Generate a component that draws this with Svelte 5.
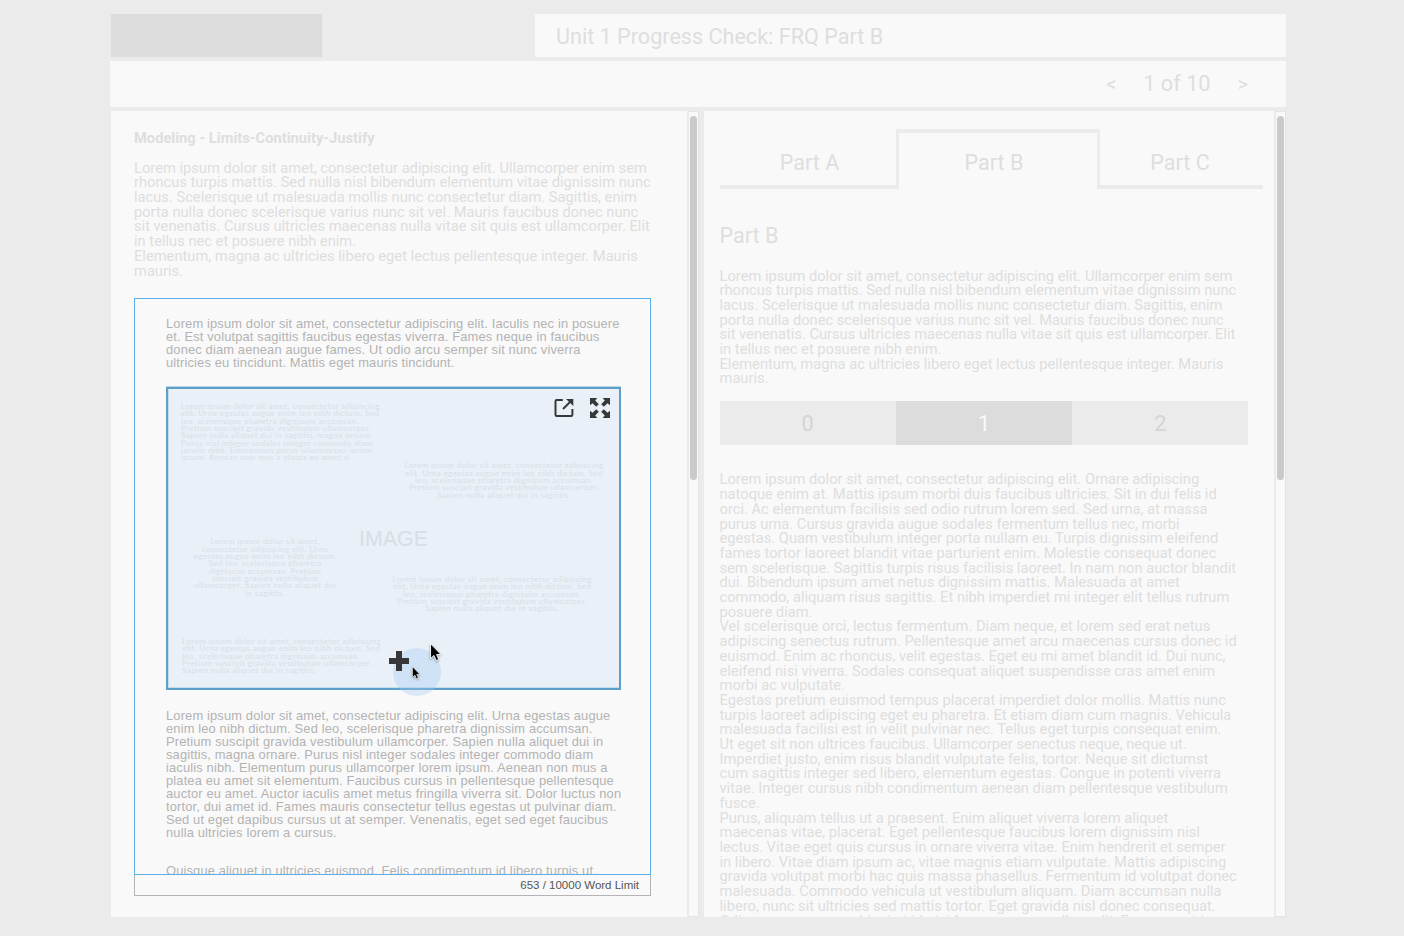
<script>
  const intro = [
    'Lorem ipsum dolor sit amet, consectetur adipiscing elit. Ullamcorper enim sem',
    'rhoncus turpis mattis. Sed nulla nisl bibendum elementum vitae dignissim nunc',
    'lacus. Scelerisque ut malesuada mollis nunc consectetur diam. Sagittis, enim',
    'porta nulla donec scelerisque varius nunc sit vel. Mauris faucibus donec nunc',
    'sit venenatis. Cursus ultricies maecenas nulla vitae sit quis est ullamcorper. Elit',
    'in tellus nec et posuere nibh enim.',
    'Elementum, magna ac ultricies libero eget lectus pellentesque integer. Mauris',
    'mauris.'
  ];
  const answer = [
    'Lorem ipsum dolor sit amet, consectetur adipiscing elit. Ornare adipiscing',
    'natoque enim at. Mattis ipsum morbi duis faucibus ultricies. Sit in dui felis id',
    'orci. Ac elementum facilisis sed odio rutrum lorem sed. Sed urna, at massa',
    'purus urna. Cursus gravida augue sodales fermentum tellus nec, morbi',
    'egestas. Quam vestibulum integer porta nullam eu. Turpis dignissim eleifend',
    'fames tortor laoreet blandit vitae parturient enim. Molestie consequat donec',
    'sem scelerisque. Sagittis turpis risus facilisis laoreet. In nam non auctor blandit',
    'dui. Bibendum ipsum amet netus dignissim mattis. Malesuada at amet',
    'commodo, aliquam risus sagittis. Et nibh imperdiet mi integer elit tellus rutrum',
    'posuere diam.',
    'Vel scelerisque orci, lectus fermentum. Diam neque, et lorem sed erat netus',
    'adipiscing senectus rutrum. Pellentesque amet arcu maecenas cursus donec id',
    'euismod. Enim ac rhoncus, velit egestas. Eget eu mi amet blandit id. Dui nunc,',
    'eleifend nisi viverra. Sodales consequat aliquet suspendisse cras amet enim',
    'morbi ac vulputate.',
    'Egestas pretium euismod tempus placerat imperdiet dolor mollis. Mattis nunc',
    'turpis laoreet adipiscing eget eu pharetra. Et etiam diam cum magnis. Vehicula',
    'malesuada facilisi est in velit pulvinar nec. Tellus eget turpis consequat enim.',
    'Ut eget sit non ultrices faucibus. Ullamcorper senectus neque, neque ut.',
    'Imperdiet justo, enim risus blandit vulputate felis, tortor. Neque sit dictumst',
    'cum sagittis integer sed libero, elementum egestas. Congue in potenti viverra',
    'vitae. Integer cursus nibh condimentum aenean diam pellentesque vestibulum',
    'fusce.',
    'Purus, aliquam tellus ut a praesent. Enim aliquet viverra lorem aliquet',
    'maecenas vitae, placerat. Eget pellentesque faucibus lorem dignissim nisl',
    'lectus. Vitae eget quis cursus in ornare viverra vitae. Enim hendrerit et semper',
    'in libero. Vitae diam ipsum ac, vitae magnis etiam vulputate. Mattis adipiscing',
    'gravida volutpat morbi hac quis massa phasellus. Fermentum id volutpat donec',
    'malesuada. Commodo vehicula ut vestibulum aliquam. Diam accumsan nulla',
    'libero, nunc sit ultricies sed mattis tortor. Eget gravida nisl donec consequat.',
    'Odio cras cursus morbi mi at id nisi fames non ac nullam elit. Fusce amet in'
  ];
  const before = [
    'Lorem ipsum dolor sit amet, consectetur adipiscing elit. Iaculis nec in posuere',
    'et. Est volutpat sagittis faucibus egestas viverra. Fames neque in faucibus',
    'donec diam aenean augue fames. Ut odio arcu semper sit nunc viverra',
    'ultricies eu tincidunt. Mattis eget mauris tincidunt.'
  ];
  const after = [
    'Lorem ipsum dolor sit amet, consectetur adipiscing elit. Urna egestas augue',
    'enim leo nibh dictum. Sed leo, scelerisque pharetra dignissim accumsan.',
    'Pretium suscipit gravida vestibulum ullamcorper. Sapien nulla aliquet dui in',
    'sagittis, magna ornare. Purus nisl integer sodales integer commodo diam',
    'iaculis nibh. Elementum purus ullamcorper lorem ipsum. Aenean non mus a',
    'platea eu amet sit elementum. Faucibus cursus in pellentesque pellentesque',
    'auctor eu amet. Auctor iaculis amet metus fringilla viverra sit. Dolor luctus non',
    'tortor, dui amet id. Fames mauris consectetur tellus egestas ut pulvinar diam.',
    'Sed ut eget dapibus cursus ut at semper. Venenatis, eget sed eget faucibus',
    'nulla ultricies lorem a cursus.'
  ];
  const short = [
    'Lorem ipsum dolor sit amet, consectetur adipiscing',
    'elit. Urna egestas augue enim leo nibh dictum. Sed',
    'leo, scelerisque pharetra dignissim accumsan.',
    'Pretium suscipit gravida vestibulum ullamcorper.'
  ];
  const notes = [
    { x: 13, y: 14, w: 204, align: 'left', lines: [...short,
      'Sapien nulla aliquet dui in sagittis, magna ornare.',
      'Purus nisl integer sodales integer commodo diam',
      'iaculis nibh. Elementum purus ullamcorper lorem',
      'ipsum. Aenean non mus a platea eu amet si'] },
    { x: 234, y: 73.5, w: 204, align: 'center', lines: [...short, 'Sapien nulla aliquet dui in sagittis.'] },
    { x: 15, y: 149.5, w: 164, align: 'center', lines: [
      'Lorem ipsum dolor sit amet,',
      'consectetur adipiscing elit. Urna',
      'egestas augue enim leo nibh dictum.',
      'Sed leo, scelerisque pharetra',
      'dignissim accumsan. Pretium',
      'suscipit gravida vestibulum',
      'ullamcorper. Sapien nulla aliquet dui',
      'in sagittis.'] },
    { x: 222, y: 187, w: 204, align: 'center', lines: [...short, 'Sapien nulla aliquet dui in sagittis.'] },
    { x: 14, y: 249, w: 204, align: 'left', lines: [...short, 'Sapien nulla aliquet dui in sagittis.'] }
  ];
</script>

{#snippet textLines(lines)}
  {#each lines as line}<div class="line">{line}</div>{/each}
{/snippet}

{#snippet pointer(cls)}
  <svg class={cls} viewBox="0 0 12 20">
    <path d="M0.6 0.4 V16.6 L4.3 13.2 L6.7 18.8 L9.6 17.6 L7.2 12.2 H12 Z" fill="#000" stroke="#fff" stroke-width="1" />
  </svg>
{/snippet}

<div class="page">
  <header class="top">
    <div class="logo"></div>
    <h1>Unit 1 Progress Check: FRQ Part B</h1>
  </header>
  <nav class="pager">
    <span class="arrow">&lt;</span><span class="count">1 of 10</span><span class="arrow">&gt;</span>
  </nav>
  <main>
    <section class="left">
      <div class="content">
        <h2>Modeling - Limits-Continuity-Justify</h2>
        <div class="copy">{@render textLines(intro)}</div>
        <div class="editor">
          <div class="doc">
            {@render textLines(before)}
            <div class="image">
              {#each notes as n}
                <div class="note" style="left:{n.x}px;top:{n.y}px;width:{n.w}px;text-align:{n.align}">
                  {@render textLines(n.lines)}
                </div>
              {/each}
              <span class="label">IMAGE</span>
              <div class="tools">
                <svg width="20" height="20" viewBox="0 0 20 20" fill="none" stroke="#383838" stroke-width="2">
                  <path d="M8.8 2 H2.8 Q1.5 2 1.5 3.3 V16.7 Q1.5 18 2.8 18 H17.1 Q18.4 18 18.4 16.7 V11" />
                  <path d="M9 11 L16.5 3.5" />
                  <path d="M12 1 H19.3 V8 Z" fill="#383838" stroke="none" />
                </svg>
                <svg width="20" height="20" viewBox="0 0 20 20" fill="#383838">
                  {#each [0, 90, 180, 270] as a}
                    <g transform="rotate({a} 10 10)">
                      <path d="M0 0 H7.3 L5.2 2.5 L8.8 6.2 L6.2 8.8 L2.5 5.2 L0 7.3 Z" />
                    </g>
                  {/each}
                </svg>
              </div>
              <div class="halo"></div>
              <div class="plus"></div>
              {@render pointer('cursor small')}
              {@render pointer('cursor big')}
            </div>
            {@render textLines(after)}
            <div class="last line">Quisque aliquet in ultricies euismod. Felis condimentum id libero turpis ut.</div>
          </div>
        </div>
        <div class="limit">653 / 10000 Word Limit</div>
      </div>
      <div class="track"><div class="thumb"></div></div>
    </section>
    <section class="right">
      <div class="content">
        <div class="tabs">
          <div class="tab a">Part A</div>
          <div class="tab b">Part B</div>
          <div class="tab c">Part C</div>
        </div>
        <h3>Part B</h3>
        <div class="copy">{@render textLines(intro)}</div>
        <div class="scores">
          <span>0</span><span class="on">1</span><span>2</span>
        </div>
        <div class="copy">{@render textLines(answer)}</div>
      </div>
      <div class="track"><div class="thumb"></div></div>
    </section>
  </main>
</div>

<style>
  :global(body) { background: #ebebeb; overflow: hidden; }
  * { box-sizing: border-box; }
  h1, h2, h3 { margin: 0; font-weight: 400; }
  .page {
    width: 1404px; height: 936px; padding: 14px 118px 0 110px;
    background: #ebebeb; color: #dedede;
    font-family: Roboto, sans-serif; overflow: hidden;
  }
  .line { white-space: nowrap; }
  .top { display: flex; justify-content: space-between; height: 43px; padding-left: 1px; }
  .logo { width: 211px; background: #dcdcdc; }
  h1 { width: 751px; padding-left: 21px; background: #f9f9f9; font-size: 21.6px; line-height: 46px; }
  .pager {
    display: flex; justify-content: flex-end; align-items: center;
    margin-top: 4px; height: 46px; padding-right: 38px; background: #f9f9f9;
    font-size: 21.7px; line-height: 46px;
  }
  .arrow { font-size: 20px; }
  .count { margin: 0 27px; }
  main { display: flex; gap: 4.5px; margin-top: 4px; height: 806px; padding-left: 1px; }
  section { display: flex; background: #f9f9f9; overflow: hidden; }
  .left { width: 588px; }
  .right { width: 582.5px; }
  .content { flex: 1; min-width: 0; }
  .left .content { padding: 18px 0 0 23px; }
  .right .content { padding: 18px 0 0 16px; }
  .track { width: 12px; border: 1px solid #e4e4e4; border-left: 2px solid #ebebeb; padding: 4px 0 0 1px; }
  .thumb { width: 7px; height: 364px; border-radius: 4px; background: #cacaca; }
  h2 { font-size: 14.7px; line-height: 18px; font-weight: 700; }
  .copy { font-size: 14.69px; line-height: 14.71px; }
  .left .copy { margin-top: 13.6px; }
  .editor {
    margin-top: 19.7px; width: 517px; height: 577px; overflow: hidden;
    border: 1px solid #5aafe8; padding: 18px 0 0 31px;
  }
  .doc { font: 12.9px/13px "Liberation Sans", sans-serif; letter-spacing: .145px; color: #b3b3b3; }
  .image {
    position: relative; width: 455px; height: 303px; margin: 18px 0 19px;
    border: 2px solid #5d9fc9; background: #e9f0f7;
    box-shadow: 0 -1px 0 #b9d6e8, inset 1px -1px 0 #c6dcea;
  }
  .note { position: absolute; font: 8.2px/7.35px Lato, sans-serif; letter-spacing: .36px; color: #d9dfe7; }
  .label {
    position: absolute; left: 191px; top: 137px; letter-spacing: 0;
    font-size: 21.4px; line-height: 26px; color: #d8dee5;
  }
  .tools { position: absolute; left: 386px; top: 9.5px; display: flex; gap: 16px; }
  .halo {
    position: absolute; left: 225px; top: 259.5px; width: 48px; height: 48px;
    border-radius: 50%; background: rgba(160, 203, 244, .34);
  }
  .plus {
    position: absolute; left: 221px; top: 262px; width: 20px; height: 20px;
    background:
      linear-gradient(#383838, #383838) center / 20px 6px no-repeat,
      linear-gradient(#383838, #383838) center / 6px 20px no-repeat;
  }
  .cursor { position: absolute; overflow: visible; filter: drop-shadow(0 1px 1px rgba(0, 0, 0, .35)); }
  .small { left: 244px; top: 277px; width: 8px; height: 14px; }
  .big { left: 262px; top: 254px; width: 11px; height: 19px; }
  .last { margin-top: 25px; }
  .limit {
    width: 517px; height: 21px; border: 1px solid #b4b4b4; border-top: 0; padding-right: 11px;
    text-align: right; font: 11.5px/20px "Liberation Sans", sans-serif; color: #555;
  }
  .tabs { display: flex; width: 543px; height: 60px; font-size: 21.6px; line-height: 60px; text-align: center; }
  .tab { padding-top: 4px; }
  .a, .c { border-bottom: 4px solid #ebebeb; }
  .a { width: 176px; padding-left: 4px; }
  .b { width: 204px; border: solid #ebebeb; border-width: 4px 3px 0; padding: 0 7px 0 0; }
  .c { width: 163px; padding-right: 2px; }
  h3 { margin-top: 34px; font-size: 21.6px; line-height: 26px; }
  .right .copy { margin-top: 19.5px; }
  .scores { display: flex; width: 529px; height: 44px; margin-top: 15px; font-size: 21.6px; line-height: 45px; text-align: center; color: #d4d4d4; }
  .scores span { flex: 1; background: #ebebeb; }
  .scores .on { background: #dcdcdc; color: #fafafa; }
  .right .scores + .copy { margin-top: 27.3px; }
</style>
